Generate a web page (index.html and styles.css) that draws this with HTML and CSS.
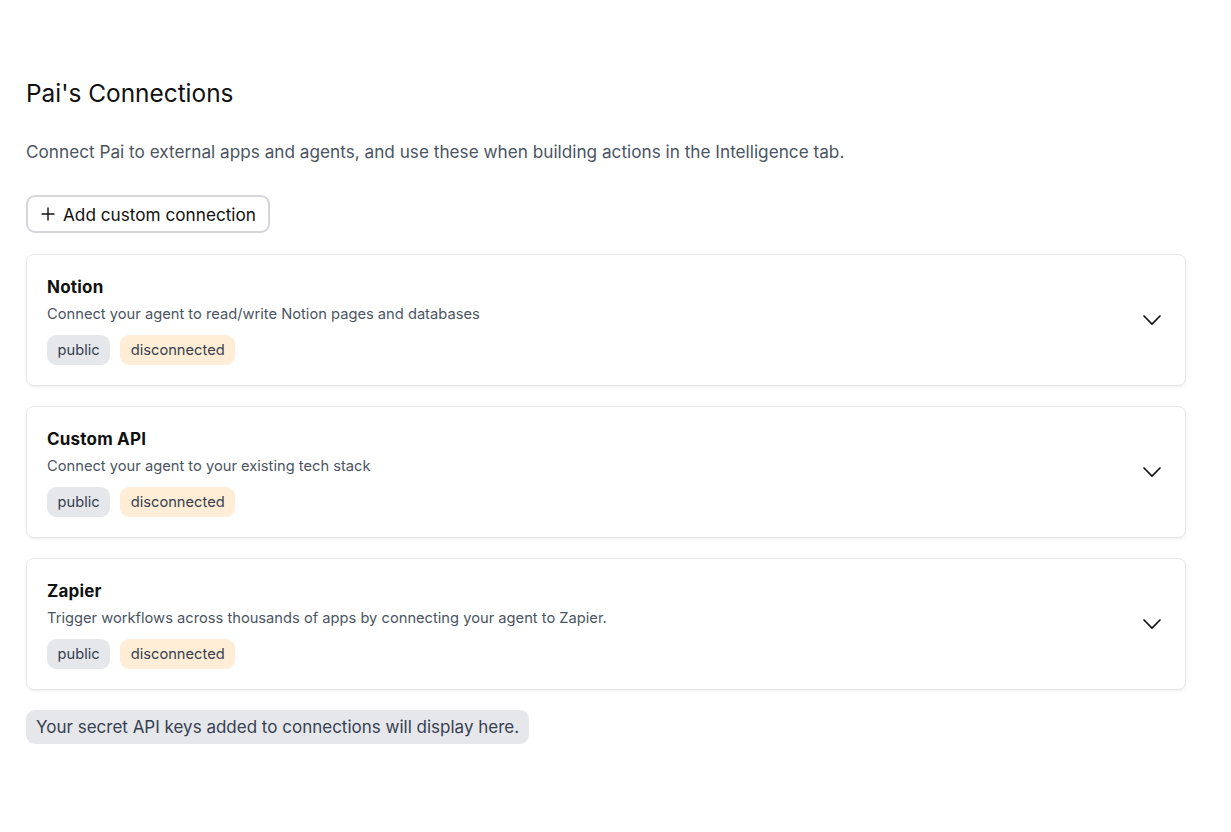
FILE: index.html
```html
<!DOCTYPE html>
<html>
<head>
<meta charset="utf-8">
<link rel="stylesheet" href="styles.css">
</head>
<body>
<main class="page">
  <h1 class="title">Pai's Connections</h1>
  <p class="subtitle">Connect Pai to external apps and agents, and use these when building actions in the Intelligence tab.</p>
  <button class="add-btn"><svg class="plus" width="16" height="16" viewBox="0 0 16 16"><path d="M8 1.5v13M1.5 8h13" stroke="#111" stroke-width="1.4" fill="none"/></svg>Add custom connection</button>
  <div class="cards">
    <div class="card">
      <div class="card-body">
        <div class="card-title">Notion</div>
        <div class="card-desc">Connect your agent to read/write Notion pages and databases</div>
        <div class="badges"><span class="badge gray">public</span><span class="badge orange">disconnected</span></div>
      </div>
      <svg class="chev" width="20" height="12" viewBox="0 0 20 12"><path d="M1.5 1.5l8.5 8.5 8.5-8.5" stroke="#111" stroke-width="1.6" fill="none"/></svg>
    </div>
    <div class="card">
      <div class="card-body">
        <div class="card-title">Custom API</div>
        <div class="card-desc">Connect your agent to your existing tech stack</div>
        <div class="badges"><span class="badge gray">public</span><span class="badge orange">disconnected</span></div>
      </div>
      <svg class="chev" width="20" height="12" viewBox="0 0 20 12"><path d="M1.5 1.5l8.5 8.5 8.5-8.5" stroke="#111" stroke-width="1.6" fill="none"/></svg>
    </div>
    <div class="card">
      <div class="card-body">
        <div class="card-title">Zapier</div>
        <div class="card-desc">Trigger workflows across thousands of apps by connecting your agent to Zapier.</div>
        <div class="badges"><span class="badge gray">public</span><span class="badge orange">disconnected</span></div>
      </div>
      <svg class="chev" width="20" height="12" viewBox="0 0 20 12"><path d="M1.5 1.5l8.5 8.5 8.5-8.5" stroke="#111" stroke-width="1.6" fill="none"/></svg>
    </div>
  </div>
  <div class="note">Your secret API keys added to connections will display here.</div>
</main>
</body>
</html>
```
FILE: styles.css
```css
html, body { margin: 0; padding: 0; background: #fff; }
body { font-family: Inter, "Open Sans", sans-serif; color: #111827; }
.page { width: 1160px; padding: 78px 0 0 26px; display: flex; flex-direction: column; align-items: flex-start; }
.title { font-size: 24.4px; font-weight: 400; margin: 0; line-height: 30px; color: #111; }
.subtitle { font-size: 17.2px; color: #4b5563; margin: 32px 0 0; line-height: 24px; }
.add-btn { margin-top: 31px; display: flex; align-items: center; gap: 7px; height: 38px; padding: 0 12px 0 12px; border: 2px solid #d4d6db; border-radius: 9px; background: #fff; font-family: inherit; font-size: 17.2px; color: #111; }
.cards { margin-top: 21px; width: 100%; display: flex; flex-direction: column; gap: 20px; }
.card { box-sizing: border-box; height: 132px; border: 1px solid #e5e7eb; border-radius: 8px; box-shadow: 0 1px 3px rgba(0,0,0,0.08); display: flex; align-items: center; justify-content: space-between; padding: 0 23px 0 20px; }
.card-body { display: flex; flex-direction: column; }
.card-title { font-size: 17px; font-weight: 700; color: #111; line-height: 22px; letter-spacing: 0.2px; }
.card-desc { font-size: 14.7px; color: #4b5563; line-height: 20px; margin-top: 6px; }
.badges { display: flex; gap: 10px; margin-top: 11px; }
.badge { height: 30px; display: flex; align-items: center; padding: 0 10.5px; border-radius: 9px; font-size: 14.7px; color: #374151; }
.gray { background: #e5e7eb; }
.orange { background: #ffedd5; }
.chev { display: block; }
.note { margin-top: 20px; background: #e5e7eb; border-radius: 9px; padding: 0 10px; height: 34px; display: flex; align-items: center; font-size: 17px; color: #374151; }
```
